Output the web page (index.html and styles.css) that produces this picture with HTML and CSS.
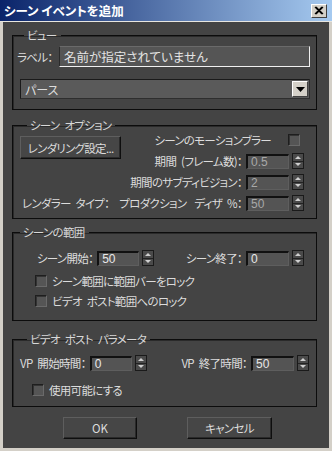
FILE: index.html
```html
<!DOCTYPE html>
<html lang="ja">
<head>
<meta charset="utf-8">
<link rel="stylesheet" href="styles.css">
</head>
<body>
<div class="window">
  <div class="titlebar">
    <span class="title">シーン イベントを追加</span>
    <span class="close"><svg width="10" height="9" viewBox="0 0 10 9"><path d="M1 1 L8 8 M2 1 L9 8 M8 1 L1 8 M9 1 L2 8" stroke="#000" stroke-width="1.2"/></svg></span>
  </div>
  <div class="client">
    <fieldset class="group g-view">
      <legend>ビュー</legend>
      <div class="label-row">
        <span class="lbl">ラベル：</span>
        <div class="textbox">名前が指定されていません</div>
      </div>
      <div class="combo">
        <span class="combo-text">パース</span>
        <span class="combo-btn"><svg width="9" height="5" viewBox="0 0 9 5"><path d="M0 0 H9 L4.5 5 Z" fill="#000"/></svg></span>
      </div>
    </fieldset>

    <fieldset class="group g-opt">
      <legend>シーン オプション</legend>
      <div class="opt-grid">
        <div class="btn render-btn">レンダリング設定...</div>
        <div class="right r1">
          <span class="lbl">シーンのモーションブラー</span>
          <span class="check cb-right"></span>
        </div>
        <div class="right r2">
          <span class="lbl">期間 (フレーム数)：</span>
          <span class="num dim">0.5</span>
          <span class="spin"><span class="up"></span><span class="dn"></span></span>
        </div>
        <div class="right r3">
          <span class="lbl">期間のサブディビジョン：</span>
          <span class="num dim">2</span>
          <span class="spin"><span class="up"></span><span class="dn"></span></span>
        </div>
        <div class="full r4">
          <div class="left"><span class="lbl">レンダラー タイプ：</span><span class="lbl prod">プロダクション</span></div>
          <div class="pair">
            <span class="lbl">ディザ %：</span>
            <span class="num dim">50</span>
            <span class="spin"><span class="up"></span><span class="dn"></span></span>
          </div>
        </div>
      </div>
    </fieldset>

    <fieldset class="group g-range">
      <legend>シーンの範囲</legend>
      <div class="range-row">
        <div class="pair start">
          <span class="lbl">シーン開始：</span>
          <span class="num w42">50</span>
          <span class="spin"><span class="up"></span><span class="dn"></span></span>
        </div>
        <div class="pair">
          <span class="lbl">シーン終了：</span>
          <span class="num">0</span>
          <span class="spin"><span class="up"></span><span class="dn"></span></span>
        </div>
      </div>
      <div class="check-row cr1"><span class="check"></span><span class="lbl">シーン範囲に範囲バーをロック</span></div>
      <div class="check-row cr2"><span class="check"></span><span class="lbl">ビデオ ポスト範囲へのロック</span></div>
    </fieldset>

    <fieldset class="group g-vp">
      <legend>ビデオ ポスト パラメータ</legend>
      <div class="vp-row">
        <div class="pair">
          <span class="lbl">VP 開始時間：</span>
          <span class="num w42">0</span>
          <span class="spin"><span class="up"></span><span class="dn"></span></span>
        </div>
        <div class="pair">
          <span class="lbl">VP 終了時間：</span>
          <span class="num">50</span>
          <span class="spin"><span class="up"></span><span class="dn"></span></span>
        </div>
      </div>
      <div class="check-row vp-check"><span class="check"></span><span class="lbl">使用可能にする</span></div>
    </fieldset>

    <div class="buttons">
      <div class="btn ok">OK</div>
      <div class="btn cancel">キャンセル</div>
    </div>
  </div>
</div>
</body>
</html>
```

FILE: styles.css
```css
* { box-sizing: border-box; }
html, body { margin: 0; padding: 0; background: #d4d0c8; }
body {
  font-family: "Noto Sans CJK JP", "Noto Sans", sans-serif;
  font-size: 11.5px;
  letter-spacing: -0.7px;
  word-spacing: 3px;
  font-feature-settings: "palt";
  color: #dcdcdc;
}
.window {
  width: 332px;
  height: 451px;
  background: #d4d0c8;
  display: flex;
  flex-direction: column;
}
.titlebar {
  background: linear-gradient(to right, #0a246a, #a6caf0);
  display: flex;
  align-items: center;
  justify-content: space-between;
  padding: 0 5px 0 4px;
  border-bottom: 1px solid #e8e6e0;
  height: 22px;
}
.title {
  color: #fff;
  font-weight: bold;
  font-size: 12.5px;
  line-height: 14px;
  letter-spacing: 0;
  word-spacing: 0;
}
.close {
  width: 16px;
  height: 14px;
  background: #d4d0c8;
  border: 1px solid;
  border-color: #fff #404040 #404040 #fff;
  display: flex;
  align-items: center;
  justify-content: center;
}
.client {
  flex: 1;
  margin: 0 3px 3px 3px;
  background: #444444;
  padding: 7px 12px 0 9px;
  display: flex;
  flex-direction: column;
}
.group {
  margin: 0;
  padding: 0;
  border: 1px solid #0c0c0c;
  box-shadow: inset 1px 1px 0 #2a2a2a;
  min-width: 0;
}
legend {
  margin-left: 7px;
  padding: 0 4px 0 3px;
  line-height: 12px;
  height: 12px;
  color: #d8d8d8;
}
.lbl { white-space: nowrap; line-height: 14px; }

/* view group */
.g-view { padding: 5px 6px 10px 4px; }
.label-row { display: flex; align-items: center; }
.label-row .lbl { width: 42px; }
.textbox {
  flex: 1;
  height: 21px;
  background: #555555;
  border: 1px solid;
  border-color: #6a6a6a #f0f0f0 #f0f0f0 #2a2a2a;
  padding: 2px 0 0 4px;
  font-size: 12.5px;
  letter-spacing: 0;
  line-height: 15px;
  color: #e4e4e4;
}
.combo {
  margin: 12px 0 0 3px;
  height: 20px;
  background: #5a5a5a;
  border: 1px solid;
  border-color: #1a1a1a #2e2e2e #2e2e2e #1a1a1a;
  display: flex;
  align-items: center;
  justify-content: space-between;
  padding: 0 1px 0 4px;
  font-size: 12px;
  letter-spacing: 0;
}
.combo-btn {
  width: 16px;
  height: 16px;
  background: #d4d0c8;
  border: 1px solid;
  border-color: #fff #404040 #404040 #fff;
  display: flex;
  align-items: center;
  justify-content: center;
}

/* options */
.g-opt { margin-top: 9px; padding: 1px 12px 7px 7px; }
.opt-grid {
  display: grid;
  grid-template-columns: auto 1fr;
  grid-template-rows: 16px 16px 16px 16px;
  row-gap: 5px;
}
.render-btn {
  grid-column: 1;
  grid-row: 1 / span 2;
  align-self: start;
  margin-top: 4px;
  width: 101px;
  height: 23px;
}
.right {
  grid-column: 2;
  justify-self: end;
  display: flex;
  align-items: center;
}
.full {
  grid-column: 1 / span 2;
  display: flex;
  justify-content: space-between;
  align-items: center;
}
.left { display: flex; align-items: center; padding-left: 2px; }
.r1 { grid-row: 1; }
.r2 { grid-row: 2; }
.r3 { grid-row: 3; }
.r4 { grid-row: 4; }
.prod { margin-left: 10px; }
.cb-right { margin: 0 4px 0 17px; }

.btn {
  background: #464646;
  border: 1px solid;
  border-color: #5e5e5e #0e0e0e #0e0e0e #5e5e5e;
  box-shadow: inset -1px -1px 0 #2a2a2a;
  display: flex;
  align-items: center;
  justify-content: center;
  color: #dcdcdc;
}
.check {
  width: 12px;
  height: 12px;
  background: #555;
  border: 1px solid;
  border-color: #1e1e1e #6a6a6a #6a6a6a #1e1e1e;
  box-shadow: inset 1px 1px 0 #333;
  flex: none;
}
.num {
  width: 43px;
  height: 15px;
  background: #545454;
  border-style: solid;
  border-width: 2px 1px 1px 2px;
  border-color: #111 #5e5e5e #5e5e5e #111;
  margin-left: 4px;
  padding-left: 3px;
  font-family: "Liberation Sans", sans-serif;
  font-size: 12px;
  letter-spacing: 0;
  line-height: 12px;
  color: #e8e8e8;
}
.num.dim { color: #a8a8a8; }
.num.w42 { width: 42px; }
.spin {
  width: 12px;
  height: 16px;
  margin-left: 3px;
  border: 1px solid #1a1a1a;
  background: #4a4a4a;
  display: flex;
  flex-direction: column;
  flex: none;
}
.spin .up, .spin .dn {
  flex: 1;
  display: flex;
  align-items: center;
  justify-content: center;
}
.spin .up { border-bottom: 1px solid #222; }
.spin .up::before {
  content: "";
  border-left: 3px solid transparent;
  border-right: 3px solid transparent;
  border-bottom: 3px solid #cfcfcf;
}
.spin .dn::before {
  content: "";
  border-left: 3px solid transparent;
  border-right: 3px solid transparent;
  border-top: 3px solid #cfcfcf;
}

/* range */
.g-range { margin-top: 7px; padding: 12px 12px 12px 0; }
.range-row, .vp-row {
  display: flex;
  justify-content: space-between;
  align-items: center;
}
.pair { display: flex; align-items: center; }
.start { padding-left: 24px; }
.check-row { display: flex; align-items: center; gap: 5px; padding-left: 22px; }
.cr1 { margin-top: 8px; }
.cr2 { margin-top: 6px; }

/* vp */
.g-vp { margin-top: 12px; padding: 10px 7px 9px 7px; }
.vp-check { padding-left: 12px; margin-top: 12px; }

.buttons {
  display: flex;
  padding-left: 51px;
  gap: 50px;
  margin-top: 10px;
}
.ok { width: 74px; height: 22px; letter-spacing: 0; }
.cancel { width: 85px; height: 22px; }
```
